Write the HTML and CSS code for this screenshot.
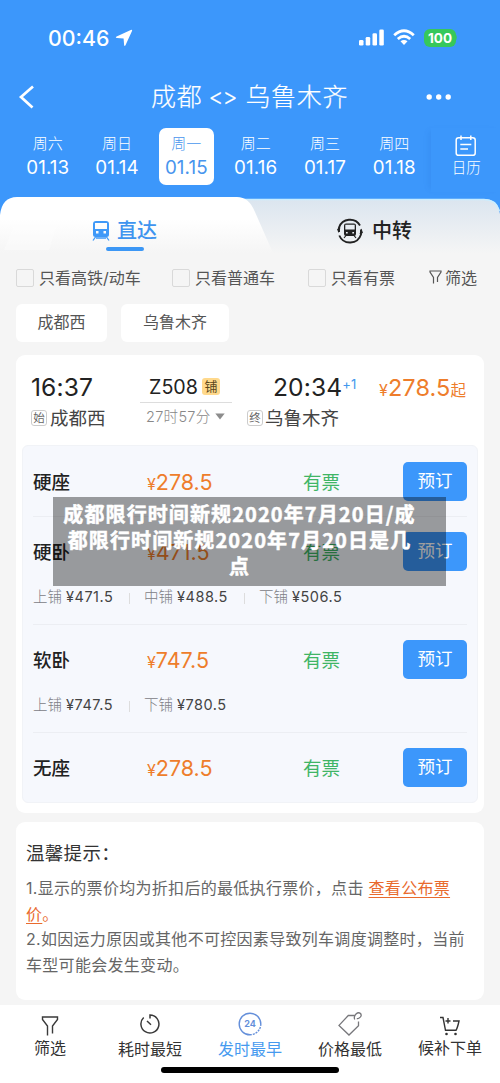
FILE: index.html
```html
<!DOCTYPE html>
<html lang="zh-CN">
<head>
<meta charset="utf-8">
<title>成都 - 乌鲁木齐</title>
<link rel="stylesheet" href="styles.css">
</head>
<body>
<div class="screen">
  <header class="header">
    <div class="status">
      <span class="clock">00:46</span>
      <svg class="locate" width="18" height="18" viewBox="0 0 18 18"><path d="M15.8.9Q17.600.2 17 1.900L10.600 16Q9.700 18 9.100 16L8.600 9.500 2 9Q-.200 8.500 1.600 7.400Z" fill="#fff"/></svg>
      <svg class="signal" width="26" height="17" viewBox="0 0 26 17" fill="#fff"><rect x="0" y="11" width="4.5" height="5.5" rx="1.3"/><rect x="6.7" y="8" width="4.5" height="8.5" rx="1.3"/><rect x="13.5" y="4.3" width="4.5" height="12.2" rx="1.3"/><rect x="20.3" y=".5" width="4.5" height="16" rx="1.3"/></svg>
      <svg class="wifi" width="22" height="17" viewBox="0 0 22 17" fill="none" stroke="#fff" stroke-width="2.8"><path d="M1.2 6.2Q11-2.6 20.8 6.2M4.8 10Q11 4.6 17.2 10"/><path d="M11 16 7.5 12.3Q11 9.5 14.5 12.3Z" fill="#fff" stroke="none"/></svg>
      <span class="battery">100</span>
      <svg class="nub" width="3" height="7" viewBox="0 0 3 7"><path d="M.6 0Q3 3.5.6 7Z" fill="#36c85b"/></svg>
    </div>
    <div class="nav">
      <svg class="back" width="17" height="24" viewBox="0 0 17 24"><path d="M15 1.5 3 12 14.5 22.5" fill="none" stroke="#fff" stroke-width="2.7"/></svg>
      <h1 class="title"><span>成都</span><span class="swap">&lt;&gt;</span><span>乌鲁木齐</span></h1>
      <svg class="more" width="26" height="8" viewBox="0 0 26 8" fill="#fff"><circle cx="3.2" cy="4" r="2.7"/><circle cx="12.7" cy="4" r="2.7"/><circle cx="22.2" cy="4" r="2.7"/></svg>
    </div>
    <div class="dates">
      <div class="day"><span>周六</span><b>01.13</b></div>
      <div class="day"><span>周日</span><b>01.14</b></div>
      <div class="day day-on"><span>周一</span><b>01.15</b></div>
      <div class="day"><span>周二</span><b>01.16</b></div>
      <div class="day"><span>周三</span><b>01.17</b></div>
      <div class="day"><span>周四</span><b>01.18</b></div>
      <div class="calendar">
        <svg width="22" height="22" viewBox="0 0 22 22" fill="none" stroke="#fff" stroke-width="1.5"><rect x="1.2" y="2.7" width="19" height="17.6" rx="2.4"/><path d="M6 .5V5M15.8.5V5M5.3 9.5H16.3M5.3 14H13"/></svg>
        <span>日历</span>
      </div>
    </div>
  </header>

  <div class="tabs">
    <svg class="tabs-bg" width="500" height="56" viewBox="0 0 500 56">
      <defs>
        <linearGradient id="off" x1="0" y1="0" x2="0" y2="1"><stop offset="0" stop-color="#dbe5ef"/><stop offset="1" stop-color="#f5f5f5"/></linearGradient>
        <linearGradient id="on" x1="0" y1="0" x2="0" y2="1"><stop offset=".4" stop-color="#fff"/><stop offset="1" stop-color="#f5f5f5"/></linearGradient>
      </defs>
      <path d="M230 2H484Q498 2 500 17V56H230Z" fill="url(#off)"/>
      <path d="M240 2.5H484Q496 2.5 499.5 14" fill="none" stroke="#c9edff" stroke-width="1.4"/>
      <path d="M0 56V18Q2 0 17 0H237Q249 0 255 15L273 56Z" fill="url(#on)"/>
      <path d="M14 28H57L49 53H4Z" fill="#fff" opacity=".3"/>
    </svg>
    <div class="tab tab-on">
      <svg width="18" height="20" viewBox="0 0 18 20"><path fill="#3f99f8" fill-rule="evenodd" d="M4 0H14Q17 0 17 3V13.5Q17 16 14.5 16H3.500Q1 16 1 13.500V3Q1 0 4 0ZM3 2V8H15V2ZM4 10V12.500H6.500V10ZM11.500 10V12.500H14V10Z"/><path d="M3.800 15.500 1 19.500M14.200 15.500 17 19.500M4 17H14" stroke="#3f99f8" stroke-width="1.300"/></svg>
      <span>直达</span>
    </div>
    <div class="tab tab-off">
      <svg width="26" height="26" viewBox="0 0 26 26"><path d="M2.300 17.500A11.600 11.600 0 0 0 24 16.500V11.500M23 7.500A11.600 11.600 0 0 0 2 9.500V14" fill="none" stroke="#222" stroke-width="1.900"/><path d="M0 11 3.500 9.500 1.500 15ZM26 15 22.500 16 24.500 10.500Z" fill="#222"/><path fill="#222" fill-rule="evenodd" d="M9 5.500H17Q19 5.500 19 7.500V16Q19 18 17 18H9Q7 18 7 16V7.500Q7 5.500 9 5.500ZM8.300 6.800V11.500H17.700V6.800ZM9 14V15.500H10.700V14ZM15.300 14V15.500H17V14Z"/><path d="M9 17.500 7 20M17 17.500 19 20" stroke="#222" stroke-width="1.200"/></svg>
      <span>中转</span>
    </div>
  </div>

  <div class="filters">
    <label class="check"><i></i>只看高铁/动车</label>
    <label class="check"><i></i>只看普通车</label>
    <label class="check"><i></i>只看有票</label>
    <span class="sift"><svg width="13" height="15" viewBox="0 0 13 15"><path d="M4.500 13.500V7.500L1 2V1H12V2L8.500 7.500V12" fill="none" stroke="#555" stroke-width="1.200"/></svg>筛选</span>
  </div>
  <div class="chips"><span class="chip chip-a">成都西</span><span class="chip chip-b">乌鲁木齐</span></div>

  <section class="train">
    <div class="summary">
      <div class="depart">
        <div class="time">16:37</div>
        <div class="station"><i>始</i>成都西</div>
      </div>
      <div class="middle">
        <div class="number">Z508<i>铺</i></div>
        <div class="duration">27时57分<svg width="10" height="7" viewBox="0 0 10 7"><path d="M.3.500H9.700L5 6.500Z" fill="#8c8c8c"/></svg></div>
      </div>
      <div class="arrive">
        <div class="time">20:34<sup>+1</sup></div>
        <div class="station"><i>终</i>乌鲁木齐</div>
      </div>
      <div class="from"><small>¥</small>278.5<em>起</em></div>
    </div>
    <div class="seats">
      <div class="seat seat-first">
        <div class="row"><b>硬座</b><span class="price"><small>¥</small>278.5</span><span class="avail">有票</span><span class="book">预订</span></div>
      </div>
      <div class="seat seat-tall">
        <div class="row"><b>硬卧</b><span class="price"><small>¥</small>471.5</span><span class="avail">有票</span><span class="book">预订</span></div>
        <div class="berths"><span>上铺 <b>¥471.5</b></span><span>中铺 <b>¥488.5</b></span><span>下铺 <b>¥506.5</b></span></div>
      </div>
      <div class="seat seat-tall">
        <div class="row"><b>软卧</b><span class="price"><small>¥</small>747.5</span><span class="avail">有票</span><span class="book">预订</span></div>
        <div class="berths"><span>上铺 <b>¥747.5</b></span><span>下铺 <b>¥780.5</b></span></div>
      </div>
      <div class="seat">
        <div class="row"><b>无座</b><span class="price"><small>¥</small>278.5</span><span class="avail">有票</span><span class="book">预订</span></div>
      </div>
    </div>
  </section>

  <section class="tips">
    <h2>温馨提示：</h2>
    <p>1.显示的票价均为折扣后的最低执行票价，点击 <a><u>查看公布票<br>价</u>。</a></p>
    <p>2.如因运力原因或其他不可控因素导致列车调度调整时，当前<br>车型可能会发生变动。</p>
  </section>

  <footer class="bottom">
    <div class="tool tool-side">
      <svg width="24" height="24" viewBox="0 0 24 24" fill="none" stroke="#3a3a3a" stroke-width="1.400"><path d="M9.500 22.500V13L4.500 6.500V4H19.500V6.500L14.500 13V20.500"/></svg>
      <span>筛选</span>
    </div>
    <div class="tool">
      <svg width="24" height="24" viewBox="0 0 24 24" fill="none" stroke="#3a3a3a" stroke-width="1.500"><path d="M12 6.500V3A9 9 0 1 1 5.700 5.500M9 9 13 12.700"/></svg>
      <span>耗时最短</span>
    </div>
    <div class="tool tool-on">
      <svg width="24" height="24" viewBox="0 0 24 24" fill="none" stroke="#648fda" stroke-width="1.400"><path d="M12 22.800A10.800 10.800 0 1 1 22.800 12"/><path d="M22.800 12A10.800 10.800 0 0 1 12 22.800" stroke-dasharray="2 1"/><text class="hours" x="12" y="15.300" text-anchor="middle">24</text></svg>
      <span>发时最早</span>
    </div>
    <div class="tool">
      <svg width="24" height="24" viewBox="0 0 24 24" fill="none" stroke="#77777b" stroke-width="1.300"><path d="M17 3.300 10.300 3.500 1 13.400 11 23 20.500 13.800V9.500M16.700 7.500Q15.500 4.500 18 2Q20.500-.300 22.500 1.500Q24.300 4 21.200 6Q19.800 7 18.800 6.500"/></svg>
      <span>价格最低</span>
    </div>
    <div class="tool tool-side">
      <svg width="24" height="24" viewBox="0 0 24 24" fill="none" stroke="#333" stroke-width="1.400"><path d="M2 4.500H5L7.500 17.300H18Q19.500 15 21 8H15M10 5V10.500M7.500 8H12.500"/><circle cx="8.500" cy="21" r="1.300" fill="#333" stroke="none"/><circle cx="17.500" cy="21" r="1.300" fill="#333" stroke="none"/></svg>
      <span>候补下单</span>
    </div>
    <div class="home"></div>
  </footer>

  <div class="caption"><span>成都限行时间新规2020年7月20日/成</span><span>都限行时间新规2020年7月20日是几</span><span>点</span></div>
</div>
</body>
</html>
```
FILE: styles.css
```css
* { box-sizing: border-box; }
body { margin: 0; font-family: Inter, "Noto Sans CJK SC", sans-serif; color: #333; background: #f5f5f5; }
svg { display: block; flex: none; }
i, em { font-style: normal; }
.screen { position: relative; width: 500px; height: 1083px; overflow: hidden; display: flex; flex-direction: column; background: #f5f5f5; white-space: nowrap; }

.header { height: 215px; background: #3c97fb; color: #fff; flex: none; }
.status { display: flex; align-items: center; height: 75px; padding-left: 48px; }
.clock { width: 62px; font-size: 21.3px; font-weight: 500; letter-spacing: 0; }
.locate { margin-left: 5px; }
.signal { margin-left: 226px; }
.wifi { margin-left: 8px; }
.battery { margin-left: 9px; width: 32px; height: 18px; border-radius: 6px; background: #36c85b; font-size: 13.5px; font-weight: 700; line-height: 18px; text-align: center; }
.nub { margin-left: -1px; }
.nav { display: flex; align-items: center; height: 44px; padding-left: 18px; }
.title { display: flex; width: 198px; margin: 0 0 0 116px; font-size: 25px; font-weight: 300; line-height: 44px; letter-spacing: .7px; -webkit-text-stroke: .2px #fff; }
.swap { width: 43px; padding-left: 6px; font-size: 23px; letter-spacing: -1px; }
.more { margin-left: 77px; }
.dates { display: flex; height: 80px; padding: 9px 0 0 20px; }
.day { display: flex; flex: none; flex-direction: column; align-items: center; width: 55.500px; height: 57px; margin-right: 13.800px; border-radius: 7px; }
.day:first-child, .day:nth-child(2), .day-on { position: static; }
.day span { margin-top: 4px; height: 24px; font-size: 15px; line-height: 24px; font-weight: 300; }
.day b { font-size: 18.800px; font-weight: 400; line-height: 24px; letter-spacing: .1px; }
.day-on { background: #fff; color: #4895ee; }
.calendar { display: flex; flex: none; flex-direction: column; align-items: center; width: 71px; height: 64px; margin-left: -5px; padding: 7px 0 0; font-size: 14.500px; line-height: 22px; font-weight: 300; box-shadow: -5px 0 6px -3px rgba(20, 80, 180, .1); }

.tabs { position: relative; display: flex; flex: none; height: 56px; margin-top: -18px; }
.tabs-bg { position: absolute; left: 0; top: 0; }
.tab { position: relative; display: flex; align-items: center; height: 54px; font-size: 20px; font-weight: 500; line-height: 54px; padding-top: 13px; }
.tab-on { width: 64px; margin-left: 92px; gap: 7px; color: #3f94ef; }
.tab-on::after { content: ""; position: absolute; left: 14px; bottom: 0; width: 38px; height: 4px; border-radius: 2px; background: #3c97f5; }
.tab-off { margin-left: 181px; gap: 9px; color: #222; }

.filters { display: flex; align-items: center; flex: none; height: 46px; padding: 3px 0 0 16px; color: #555; font-size: 16px; line-height: 24px; }
.check { display: flex; align-items: center; gap: 5px; width: 156px; }
.check i { width: 18px; height: 18px; border: 1.500px solid #d9d9d9; border-radius: 2px; }
.check:nth-child(2) { width: 136px; }
.check:nth-child(3) { width: 121px; }
.sift { display: flex; align-items: center; gap: 3px; }
.chips { display: flex; gap: 14px; flex: none; height: 55px; padding: 5px 0 0 16px; color: #555; }
.chip { height: 38px; border-radius: 6px; background: #fff; font-size: 16px; line-height: 37px; text-align: center; }
.chip-a { width: 91px; }
.chip-b { width: 108px; }

.train { flex: none; height: 458px; margin: 1px 16px 0; padding: 0 6px; border-radius: 9px; background: #fff; }
.summary { display: flex; height: 90px; padding: 16px 0 0 9px; }
.depart { width: 109px; }
.time { height: 32px; font-size: 24.600px; line-height: 32px; letter-spacing: .1px; color: #222; }
.time sup { display: inline-block; font-size: 13px; line-height: 12px; vertical-align: 7px; color: #4298ed; }
.station { display: flex; align-items: center; gap: 3px; height: 30px; font-size: 18.500px; line-height: 30px; color: #444; }
.station i { width: 16px; height: 16px; border: 1px solid #ccc; border-radius: 3px; font-size: 11.500px; line-height: 14px; text-align: center; color: #666; }
.middle { width: 92px; }
.number { display: flex; align-items: center; gap: 4px; height: 32px; padding-left: 9px; border-bottom: 1px solid #ddd; font-size: 19.700px; color: #222; }
.number i { width: 18px; height: 17px; border-radius: 3px; background: #ffd98c; font-size: 13px; line-height: 16px; text-align: center; color: #5a461c; }
.duration { display: flex; align-items: center; gap: 4px; padding-left: 6px; font-size: 14.500px; line-height: 27px; color: #888; font-weight: 300; letter-spacing: .3px; }
.arrive { width: 147px; padding-left: 15px; }
.arrive .time { padding-left: 26px; }
.arrive .station { gap: 2px; }
.from { margin-top: 2px; font-size: 23.500px; line-height: 30px; letter-spacing: .1px; color: #ee7d2b; }
.from small, .price small { font-size: 16px; }
.from em { font-size: 15.500px; }

.seats { height: 358px; padding: 0 10px; border: 1px solid #f1f3f7; border-radius: 6px; background: #f6f8fd; }
.seat { border-top: 1px solid #eceef3; height: 85px; }
.seat-first { height: 70px; border: 0; }
.seat-tall { height: 108px; }
.row { display: flex; align-items: center; height: 69px; }
.seat-first .row { height: 71px; }
.row > b { width: 114px; margin-top: -2px; font-size: 18.500px; font-weight: 500; color: #222; }
.price { width: 156px; font-size: 21.500px; letter-spacing: 0; color: #ee7d2b; }
.avail { width: 100px; margin-top: -2px; font-size: 18.500px; color: #3fb565; }
.book { width: 64px; height: 39px; border-radius: 5px; background: #3c97fb; color: #fff; font-size: 17.500px; line-height: 38px; text-align: center; }
.berths { display: flex; height: 20px; margin-top: 1px; font-size: 14.500px; line-height: 20px; color: #808086; }
.berths span { width: 111px; font-weight: 300; }
.berths span + span::before { content: ""; display: inline-block; width: 1px; height: 11px; margin: 0 14px 0 -15px; background: #ddd; vertical-align: -2px; }
.berths b { font-weight: 400; letter-spacing: .5px; color: #444; }
.berths span + span { width: 115px; }

.tips { flex: none; height: 178px; margin: 9px 16px 0; padding: 16px 10px 0; border-radius: 9px; background: #fff; color: #666; font-size: 16px; line-height: 25.500px; letter-spacing: .3px; }
.tips h2 { margin: 0 0 8px; font-size: 18.500px; font-weight: 400; line-height: 30px; color: #333; }
.tips p { margin: 0; }
.tips a { color: #e96a2d; }
.tips u { text-underline-offset: 3px; text-decoration-thickness: 1px; }

.bottom { position: relative; display: flex; flex: none; height: 78px; margin-top: 5px; background: #fff; color: #333; }
.tool { display: flex; flex-direction: column; align-items: center; width: 100px; padding-top: 7px; font-size: 16px; line-height: 24px; }
.tool-side { padding-top: 8px; }
.tool span { margin-top: 1px; }
.tool-side span { margin-top: -1px; }
.tool-on { color: #469aef; }
.hours { font: 700 9px Inter, sans-serif; fill: #648fda; stroke: none; }
.home { position: absolute; left: 161px; top: 62px; width: 178px; height: 6px; border-radius: 3px; background: #000; }

.caption { position: absolute; left: 53px; top: 497px; width: 393px; height: 89px; padding: 4px 20px 0 0; background: rgba(0, 0, 0, .38); color: #fff; font: 700 20px/26px "Noto Sans CJK SC", sans-serif; letter-spacing: 1.100px; text-align: center; -webkit-text-stroke: .5px #fff; }
.caption span { display: block; }
```
